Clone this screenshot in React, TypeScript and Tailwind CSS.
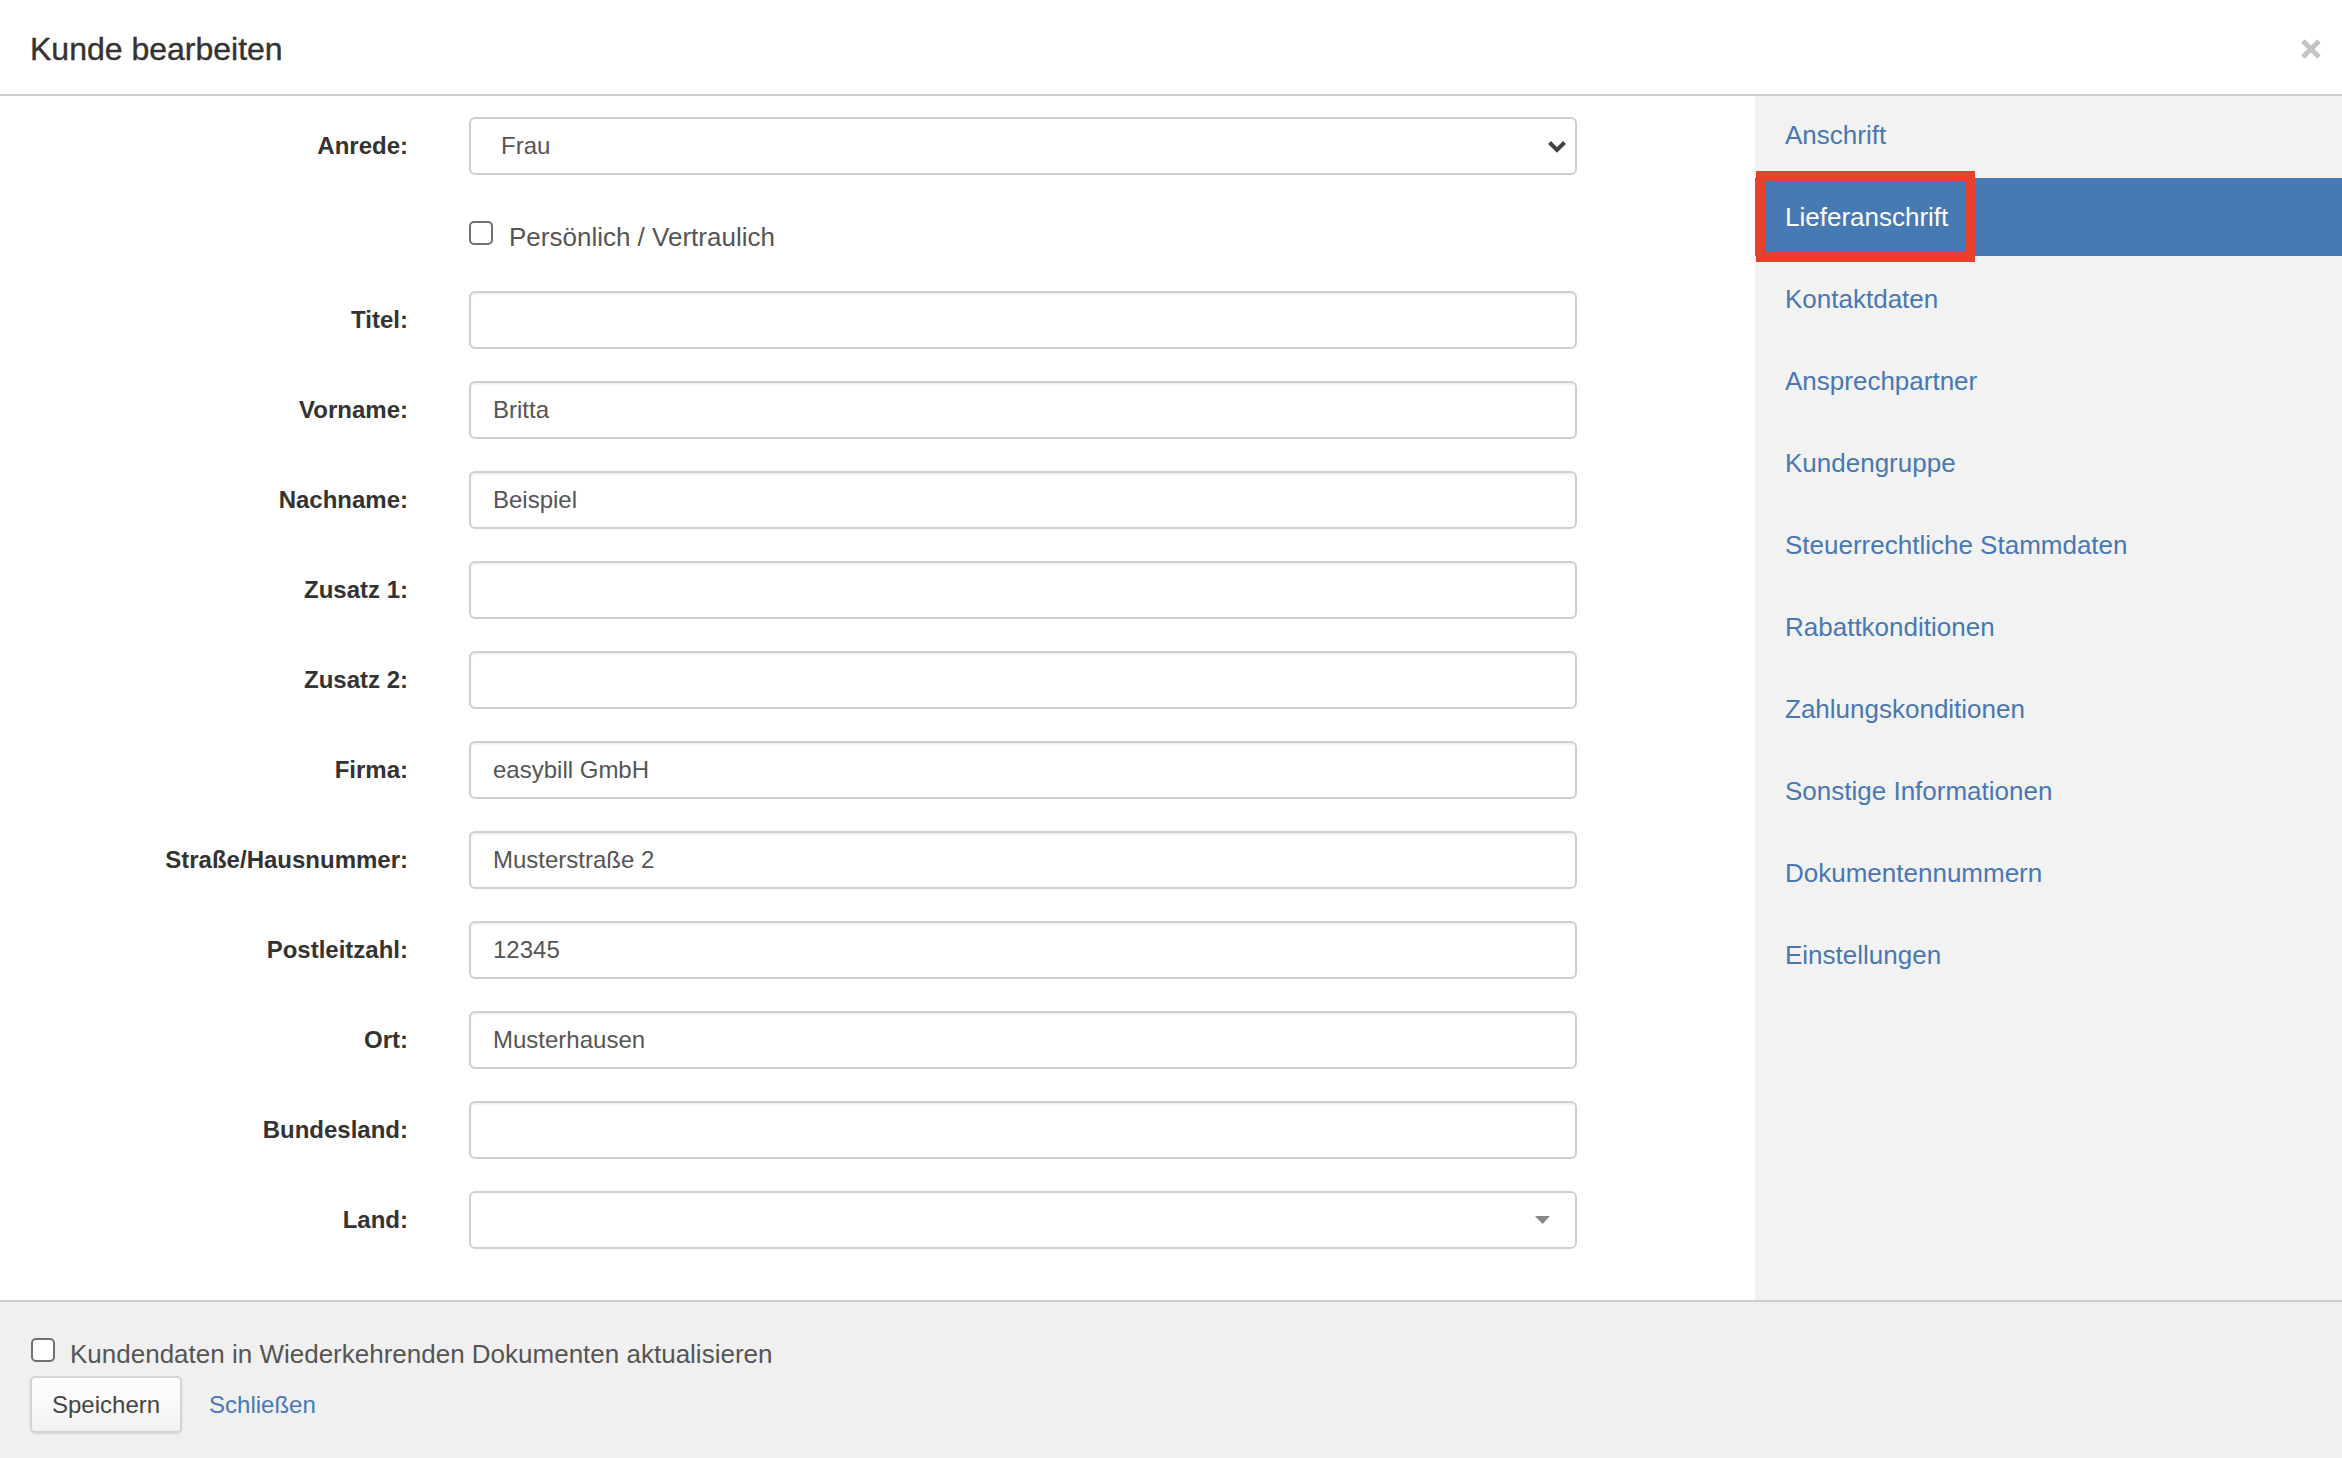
import React from "react";

const fields: { label: string; value: string }[] = [
  { label: "Titel:", value: "" },
  { label: "Vorname:", value: "Britta" },
  { label: "Nachname:", value: "Beispiel" },
  { label: "Zusatz 1:", value: "" },
  { label: "Zusatz 2:", value: "" },
  { label: "Firma:", value: "easybill GmbH" },
  { label: "Straße/Hausnummer:", value: "Musterstraße 2" },
  { label: "Postleitzahl:", value: "12345" },
  { label: "Ort:", value: "Musterhausen" },
  { label: "Bundesland:", value: "" },
];

const navItems = [
  "Anschrift",
  "Lieferanschrift",
  "Kontaktdaten",
  "Ansprechpartner",
  "Kundengruppe",
  "Steuerrechtliche Stammdaten",
  "Rabattkonditionen",
  "Zahlungskonditionen",
  "Sonstige Informationen",
  "Dokumentennummern",
  "Einstellungen",
];

function Checkbox() {
  return <span className="block w-[24px] h-[24px] shrink-0 rounded-[5px] border-2 border-[#707070] bg-white" />;
}

function Row({ label, children }: { label: string; children: React.ReactNode }) {
  return (
    <div className="flex items-center h-[58px]">
      <div className="w-[408px] text-right font-bold text-[24px] text-[#333]">{label}</div>
      <div className="ml-[61px] w-[1108px] h-full">{children}</div>
    </div>
  );
}

function TextBox({ value }: { value: string }) {
  return (
    <div className="h-full w-full flex items-center pl-[22px] rounded-[6px] border-2 border-[#cfcfcf] bg-white shadow-[inset_0_2px_2px_rgba(0,0,0,0.06)] text-[24px] text-[#555]">
      {value}
    </div>
  );
}

export default function App() {
  return (
    <div className="w-[2342px] h-[1458px] flex flex-col bg-white text-[#555] font-['Liberation_Sans',Arial,sans-serif]">
      {/* Header */}
      <div className="h-[96px] shrink-0 flex items-center justify-between pl-[30px] pr-[20px] border-b-2 border-[#cccccc]">
        <h1 className="text-[32px] text-[#333] leading-none pt-[4px] [-webkit-text-stroke:0.4px_#333]">Kunde bearbeiten</h1>
        <svg width="22" height="22" viewBox="0 0 22 22" className="mt-[4px]">
          <path d="M3 3 L19 19 M19 3 L3 19" stroke="#c4c4c4" strokeWidth="5" strokeLinecap="butt" />
        </svg>
      </div>

      {/* Body */}
      <div className="flex flex-1 min-h-0">
        <div className="flex-1 flex flex-col gap-[32px] pt-[21px]">
          <Row label="Anrede:">
            <div className="h-full w-full flex items-center justify-between pl-[30px] pr-[8px] rounded-[6px] border-2 border-[#cfcfcf] bg-white text-[24px] text-[#555]">
              <span>Frau</span>
              <svg width="20" height="13" viewBox="0 0 20 13">
                <path d="M2.5 2.5 L10 10 L17.5 2.5" fill="none" stroke="#444" strokeWidth="4" />
              </svg>
            </div>
          </Row>
          <div className="h-[52px] flex items-start pt-[14px] pl-[469px] gap-[16px]">
            <Checkbox />
            <span className="text-[26px] leading-[36px] -mt-[2px] text-[#555]">Persönlich / Vertraulich</span>
          </div>
          {fields.map((f) => (
            <Row key={f.label} label={f.label}>
              <TextBox value={f.value} />
            </Row>
          ))}
          <Row label="Land:">
            <div className="h-full w-full flex items-center justify-end pr-[25px] rounded-[6px] border-2 border-[#cfcfcf] bg-white">
              <svg width="15" height="8" viewBox="0 0 15 8">
                <path d="M0 0 L15 0 L7.5 8 Z" fill="#888" />
              </svg>
            </div>
          </Row>
        </div>

        {/* Sidebar */}
        <div className="w-[587px] shrink-0 bg-[#f2f2f2] flex flex-col gap-[4px]">
          {navItems.map((item) =>
            item === "Lieferanschrift" ? (
              <div key={item} className="relative h-[78px] flex items-center pl-[30px] bg-[#477ab3] text-white text-[26px]">
                {item}
                <span className="absolute left-[1px] -top-[7px] w-[219px] h-[91px] border-[10px] border-[#e8412b]" />
              </div>
            ) : (
              <div key={item} className="h-[78px] flex items-center pl-[30px] text-[#4778b4] text-[26px]">
                {item}
              </div>
            )
          )}
        </div>
      </div>

      {/* Footer */}
      <div className="h-[158px] shrink-0 border-t-2 border-[#cccccc] bg-[#f0f0f0] px-[30px] pt-[34px]">
        <div className="flex items-start">
          <div className="mt-[2px] ml-[1px]">
            <Checkbox />
          </div>
          <span className="ml-[15px] text-[26px] leading-[36px] text-[#555]">
            Kundendaten in Wiederkehrenden Dokumenten aktualisieren
          </span>
        </div>
        <div className="mt-[4px] flex items-center gap-[27px]">
          <button className="h-[57px] px-[20px] rounded-[5px] border-2 border-[#d4d4d4] bg-gradient-to-b from-white to-[#f2f2f2] shadow-[0_1px_2px_rgba(0,0,0,0.12)] text-[24px] text-[#444]">
            Speichern
          </button>
          <span className="text-[24px] text-[#4778b4]">Schließen</span>
        </div>
      </div>
    </div>
  );
}
